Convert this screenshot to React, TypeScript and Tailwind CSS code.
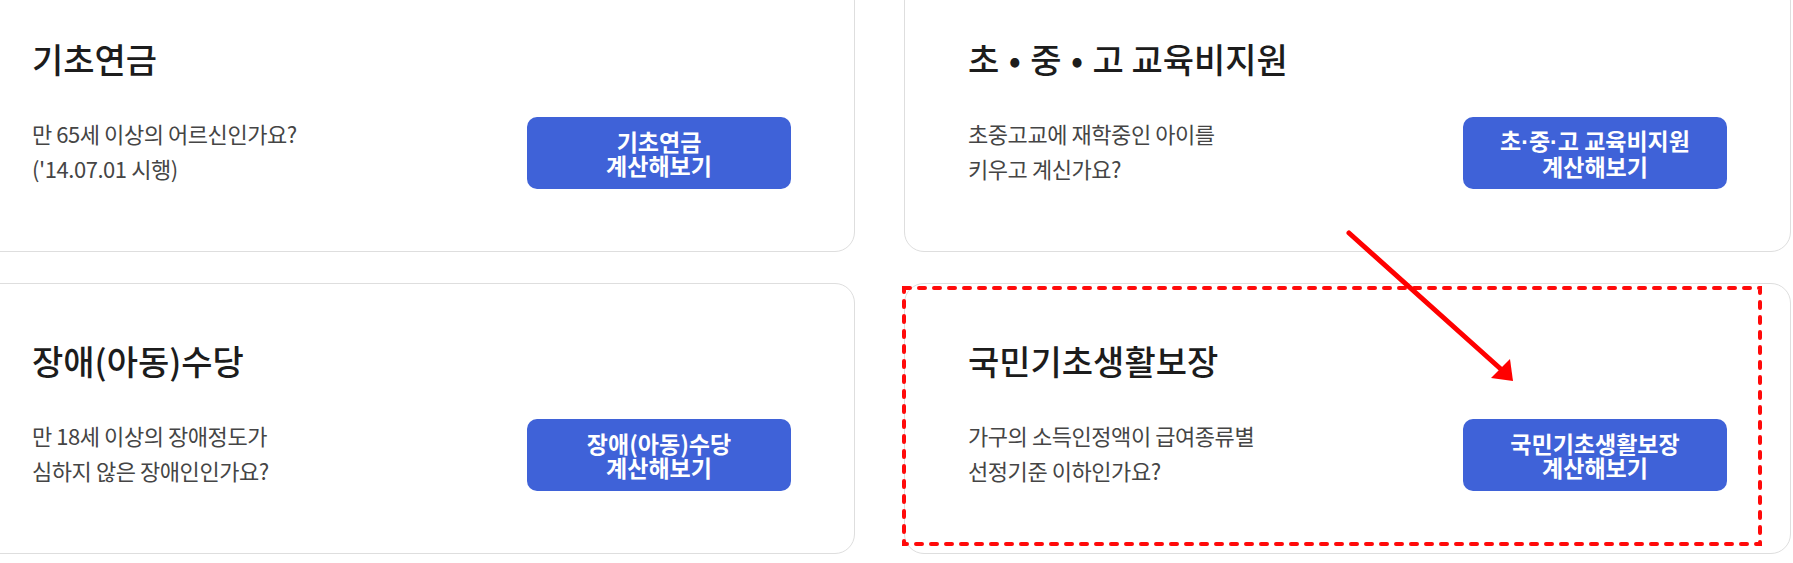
import React from "react";

type CardData = {
  title: React.ReactNode;
  desc: [string, string];
  button: [React.ReactNode, string];
};

const Bullet = () => (
  <span className="inline-block w-[31px] text-center">•</span>
);

const Dot = () => (
  <span style={{ fontFamily: '"Liberation Sans", sans-serif' }}>·</span>
);

const cards: CardData[] = [
  {
    title: "기초연금",
    desc: ["만 65세 이상의 어르신인가요?", "('14.07.01 시행)"],
    button: ["기초연금", "계산해보기"],
  },
  {
    title: (
      <>
        초<Bullet />중<Bullet />고 교육비지원
      </>
    ),
    desc: ["초중고교에 재학중인 아이를", "키우고 계신가요?"],
    button: [
      <>
        초<Dot />중<Dot />고 교육비지원
      </>,
      "계산해보기",
    ],
  },
  {
    title: "장애(아동)수당",
    desc: ["만 18세 이상의 장애정도가", "심하지 않은 장애인인가요?"],
    button: ["장애(아동)수당", "계산해보기"],
  },
  {
    title: "국민기초생활보장",
    desc: ["가구의 소득인정액이 급여종류별", "선정기준 이하인가요?"],
    button: ["국민기초생활보장", "계산해보기"],
  },
];

function Card({ title, desc, button }: CardData) {
  return (
    <div className="rounded-[20px] border border-[#dedede] bg-white pl-[63px] pr-[63px] pt-[54px] pb-[62px]">
      <h2 className="text-[34px] leading-[45px] font-medium text-[#1c1c1c]">
        {title}
      </h2>
      <div className="mt-[36px] flex h-[72px] items-center justify-between">
        <p className="mb-[5px] text-[22px] leading-[35px] tracking-[-0.02em] text-[#454545]">
          {desc[0]}
          <br />
          {desc[1]}
        </p>
        <button className="flex h-[72px] w-[264px] flex-col items-center justify-center rounded-[10px] bg-[#3f62d8] text-[23px] leading-[24px] font-bold text-white">
          <span>{button[0]}</span>
          <span>{button[1]}</span>
        </button>
      </div>
    </div>
  );
}

export default function App() {
  return (
    <div
      className="relative h-[563px] w-[1793px] overflow-hidden bg-white"
      style={{ fontFamily: '"Noto Sans CJK KR", "Noto Sans", sans-serif' }}
    >
      <div className="ml-[-32px] mt-[-19px] grid w-[1823px] grid-cols-[887px_887px] gap-x-[49px] gap-y-[31px]">
        {cards.map((c, i) => (
          <Card key={i} {...c} />
        ))}
      </div>

      {/* annotation overlay */}
      <svg
        className="pointer-events-none absolute left-0 top-0"
        width="1793"
        height="563"
        viewBox="0 0 1793 563"
      >
        <rect
          x="904"
          y="288"
          width="856"
          height="256"
          fill="none"
          stroke="#ff0a0a"
          strokeWidth="4"
          strokeDasharray="6 9"
          strokeLinecap="round"
        />
        <line
          x1="1349"
          y1="233"
          x2="1503"
          y2="371"
          stroke="#ff0000"
          strokeWidth="5"
          strokeLinecap="round"
        />
        <polygon points="1513,381 1491,378 1510,359" fill="#ff0000" />
      </svg>
    </div>
  );
}
